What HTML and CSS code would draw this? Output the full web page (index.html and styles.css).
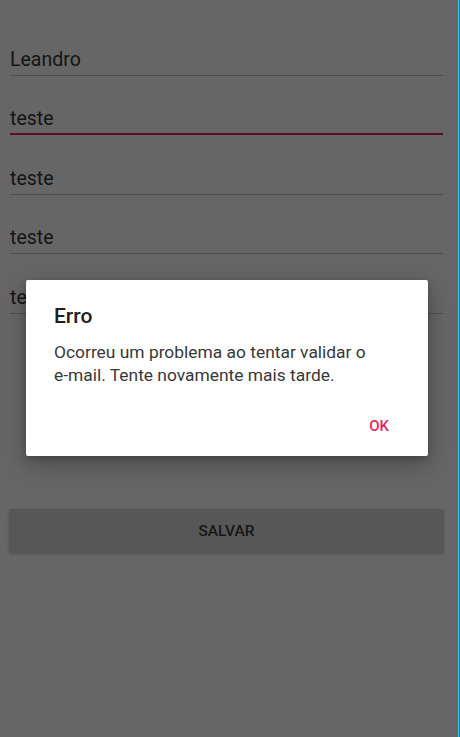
FILE: index.html
```html
<!DOCTYPE html>
<html lang="pt">
<head>
<meta charset="utf-8">
<title>Cadastro</title>
<link rel="stylesheet" href="styles.css">
</head>
<body>
<div class="screen">
  <div class="form">
    <div class="field"><span class="value">Leandro</span></div>
    <div class="field focused"><span class="value">teste</span></div>
    <div class="field"><span class="value">teste</span></div>
    <div class="field"><span class="value">teste</span></div>
    <div class="field"><span class="value">teste</span></div>
    <div class="spacer"></div>
    <div class="save-btn">SALVAR</div>
  </div>
  <div class="dialog">
    <div class="dialog-title">Erro</div>
    <div class="dialog-body">Ocorreu um problema ao tentar validar o <span class="nowrap">e-mail.</span> Tente novamente mais tarde.</div>
    <div class="dialog-actions"><span class="dialog-ok">OK</span></div>
  </div>
</div>
</body>
</html>
```
FILE: styles.css
```css
html, body {
  margin: 0;
  padding: 0;
  background: #666666;
}
body {
  width: 460px;
  height: 737px;
  overflow: hidden;
  font-family: Roboto, "Noto Sans", sans-serif;
}
.screen {
  position: relative;
  width: 458px;
  height: 737px;
  border-right: 1px solid #36c3e4;
  box-sizing: content-box;
}
.form {
  padding: 16px 0 0 10px;
  width: 433px;
}
.field {
  height: 59.5px;
  box-sizing: border-box;
  border-bottom: 1px solid #4f4f4f;
  display: flex;
  align-items: flex-end;
  padding-bottom: 3px;
}
.field.focused {
  border-bottom: 2px solid #5d0b2a;
  padding-bottom: 2px;
}
.value {
  font-size: 19.5px;
  line-height: 24px;
  color: #141414;
}
.spacer {
  height: 195.5px;
}
.save-btn {
  height: 44px;
  margin-left: -1px;
  width: 435px;
  background: #575757;
  border-radius: 2px;
  box-shadow: 0 1px 3px rgba(0,0,0,0.18);
  display: flex;
  align-items: center;
  justify-content: center;
  font-size: 15.5px;
  font-weight: 500;
  color: #161616;
}
.dialog {
  position: absolute;
  left: 26px;
  top: 280px;
  width: 402px;
  height: 176px;
  box-sizing: border-box;
  background: #ffffff;
  border-radius: 2px;
  box-shadow: 0 8px 24px rgba(0,0,0,0.28), 0 2px 6px rgba(0,0,0,0.2);
  padding: 23px 28px 0 28px;
}
.dialog-title {
  font-size: 21px;
  font-weight: 500;
  line-height: 26px;
  color: #212121;
}
.dialog-body {
  margin-top: 12px;
  font-size: 17.4px;
  line-height: 23px;
  color: #383838;
  width: 340px;
}
.nowrap {
  white-space: nowrap;
}
.dialog-actions {
  display: flex;
  justify-content: flex-end;
  margin-top: 30px;
  padding-right: 11px;
}
.dialog-ok {
  font-size: 15px;
  font-weight: 500;
  color: #e91e63;
  line-height: 18px;
}
```
